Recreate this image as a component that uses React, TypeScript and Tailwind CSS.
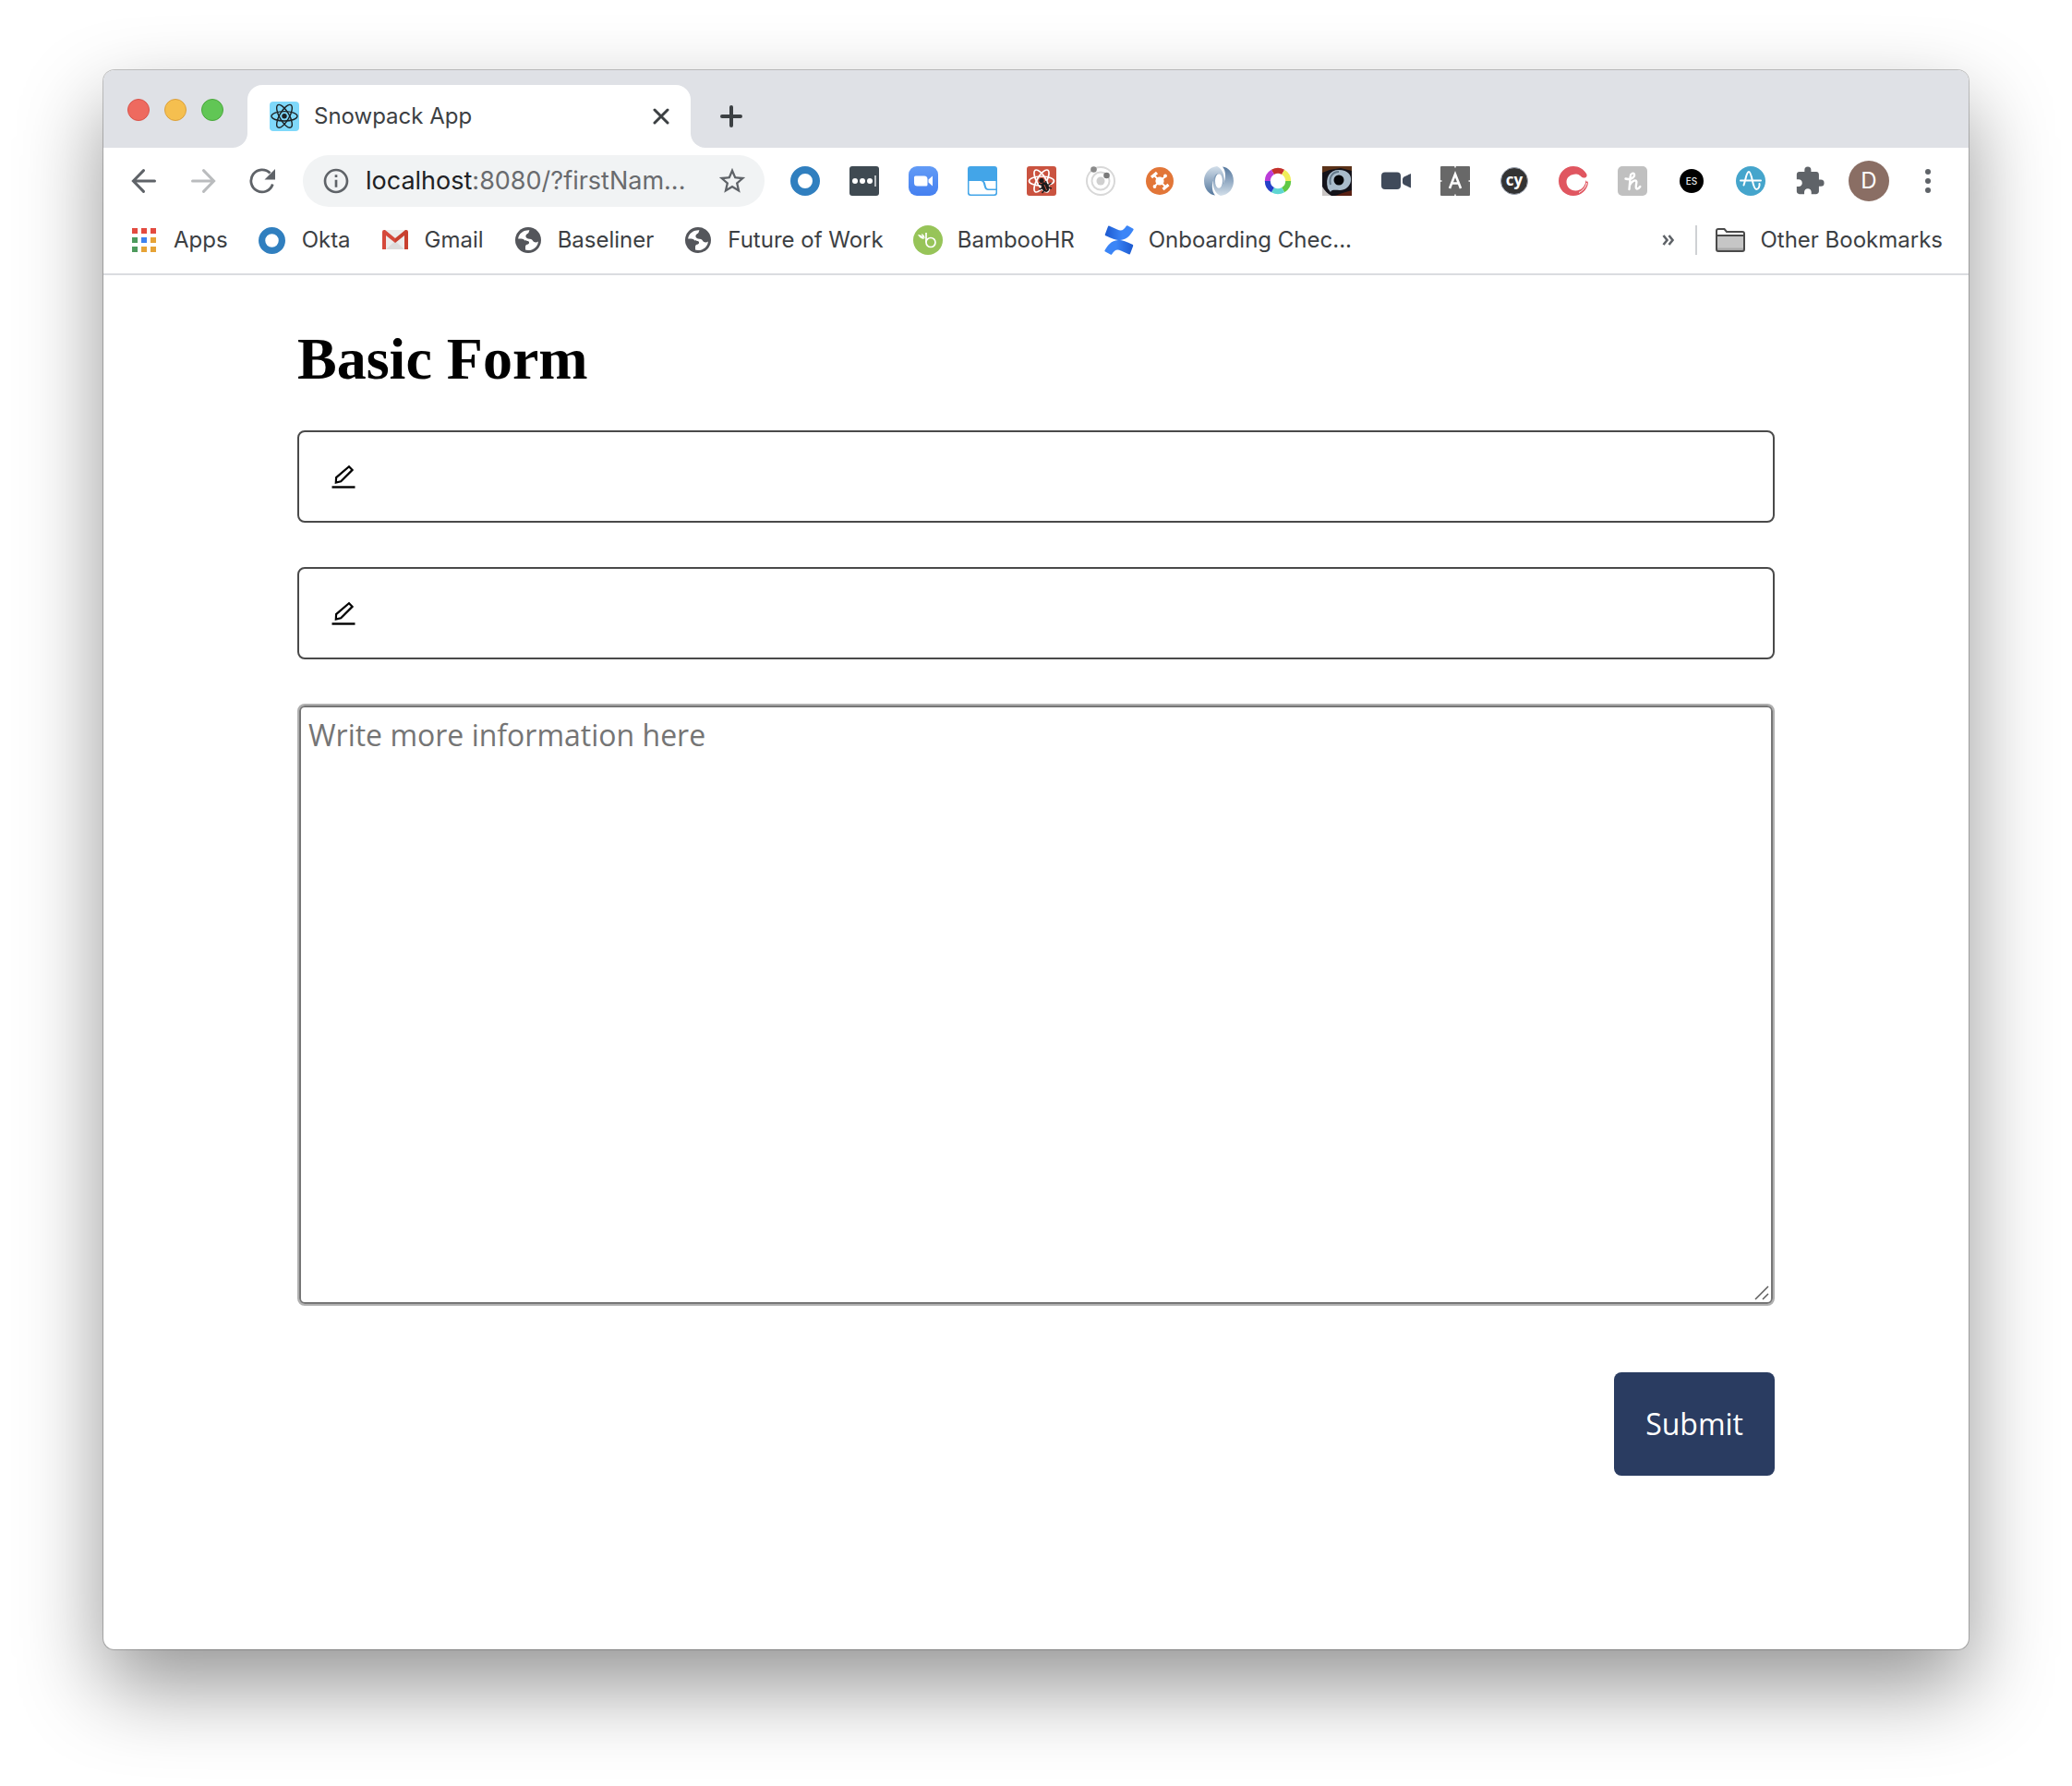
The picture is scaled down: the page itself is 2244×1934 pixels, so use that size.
import type { ReactNode } from 'react';
import { MdStarBorder, MdInfoOutline, MdExtension } from 'react-icons/md';

function OktaIcon({ size }: { size: number }) {
  return (
    <svg width={size} height={size} viewBox="0 0 32 32">
      <circle cx="16" cy="16" r="12" fill="none" stroke="#307fbf" strokeWidth="8" />
    </svg>
  );
}

function ReactIcon() {
  return (
    <svg width="32" height="32" viewBox="0 0 32 32">
      <rect width="32" height="32" rx="4" fill="#7fd8fa" />
      <circle cx="16" cy="15.8" r="2.7" fill="#1d2326" />
      <g fill="none" stroke="#1d2326" strokeWidth="1.4">
        <ellipse cx="16" cy="15.8" rx="14" ry="5.2" />
        <ellipse cx="16" cy="15.8" rx="14" ry="5.2" transform="rotate(60 16 15.8)" />
        <ellipse cx="16" cy="15.8" rx="14" ry="5.2" transform="rotate(120 16 15.8)" />
      </g>
    </svg>
  );
}

function ArrowIcon({ flip = false }: { flip?: boolean }) {
  return (
    <svg width="28" height="28" viewBox="0 0 28 28" className={flip ? 'rotate-180 text-[#babcbe]' : 'text-[#5f6368]'}>
      <path d="M25.5 14H2.8M13.5 2.6L2.4 14l11.1 11.4" fill="none" stroke="currentColor" strokeWidth="3" strokeLinecap="round" />
    </svg>
  );
}

function ReloadIcon() {
  return (
    <svg width="28" height="28" viewBox="0 0 28 28">
      <path d="M25.3 17.5A12 12 0 1 1 22.5 5.5" fill="none" stroke="#5f6368" strokeWidth="2.8" />
      <path d="M28 1v11.5H16.500z" fill="#5f6368" />
    </svg>
  );
}

function GmailIcon() {
  return (
    <svg width="28" height="22" viewBox="0 0 28 22">
      <path d="M2 0h24v21H2z" fill="#ececec" />
      <path d="M4 21L14 12l10 9z" fill="#dcdcdc" />
      <path d="M0 2q0-2 2-2h1l11 9v5L4 6v15H0z" fill="#d5493b" />
      <path d="M28 2q0-2-2-2h-1L14 9v5L24 6v15h4z" fill="#c8402f" />
    </svg>
  );
}

function GlobeIcon() {
  return (
    <svg width="28" height="28" viewBox="0 0 28 28">
      <circle cx="14" cy="14" r="14" fill="#54565b" />
      <path d="M15.500 3.200C9 2.700 3.600 7 3.100 12.500c2.500-.3 5.900 0 6.900 1.500 1 1.400 3.500.3 4.600 1.500 1 1.200.2 3-1.600 3.200-1.500.2-2 1.300-2 2.600v3.300c1.700.6 4.800.6 6.900-.2 4-1.500 6.700-4.800 7-8.900-1.500.8-3 1.300-4.500.4-1.600-1-1.700-2.700-3.400-3-2.500-.3-5.500-.8-5.600-3.200 0-2 1.700-2.400 2.700-3.300.8-.8.700-2.200 1.400-3.200z" fill="#fff" />
    </svg>
  );
}

function BambooIcon() {
  return (
    <svg width="32" height="32" viewBox="0 0 32 32">
      <circle cx="16" cy="16" r="16" fill="#97c459" />
      <g fill="none" stroke="#fff">
        <path d="M14 8v10.500" strokeWidth="1.700" />
        <circle cx="19" cy="18.500" r="5" strokeWidth="1.700" />
      </g>
      <path d="M5 10c3 .2 5 1 7 5-3.500-.3-5.500-2-7-5zM9 9c2.300 1 3.500 2.500 3.600 5.200C10.500 13 9.500 11.500 9 9z" fill="#fff" />
    </svg>
  );
}

function ConfluenceIcon() {
  const wing = 'M5 .6Q4.500 0 4 1.200L.8 9.800Q.6 10.800 1.500 11.200C8 14 12 16 17 16c8-.5 11-5.500 14.500-11Q32 4 31 3.500L25 .2Q24.200 0 23.800.7C21 5 18.500 6.800 14 4.500z';
  return (
    <svg width="32" height="32" viewBox="0 0 32 32">
      <defs>
        <linearGradient id="wing" x1="1" y1="0" x2="0" y2="0">
          <stop offset=".4" stopColor="#3b85f7" />
          <stop offset="1" stopColor="#1c59cf" />
        </linearGradient>
      </defs>
      <path d={wing} fill="url(#wing)" />
      <path d={wing} fill="url(#wing)" transform="rotate(180 16 16)" />
    </svg>
  );
}

function AppsIcon() {
  const colors = ['#e34a3f', '#e34a3f', '#e34a3f', '#4d9a5d', '#3d82f0', '#e6a336', '#4d9a5d', '#e6a336', '#e6a336'];
  return (
    <svg width="26" height="26" viewBox="0 0 26 26">
      {colors.map((c, i) => (
        <rect key={i} x={(i % 3) * 10} y={Math.floor(i / 3) * 10} width="6" height="6" fill={c} />
      ))}
    </svg>
  );
}

function FolderIcon() {
  return (
    <svg width="32" height="26" viewBox="0 0 32 26">
      <path d="M1 3q0-2 2-2h6.500l2.500 3h17q2 0 2 2v17q0 2-2 2H3q-2 0-2-2z" fill="#fff" />
      <path d="M2 8h28v16H2z" fill="#c6c6c6" />
      <path d="M2 21.500h28V24H2z" fill="#ababab" />
      <path d="M1 3q0-2 2-2h6.500l2.500 3h17q2 0 2 2v17q0 2-2 2H3q-2 0-2-2zM1 8h30" fill="none" stroke="#4a4a4a" strokeWidth="2" />
    </svg>
  );
}

function Svg32({ children }: { children: ReactNode }) {
  return (
    <svg width="32" height="32" viewBox="0 0 32 32">
      {children}
    </svg>
  );
}

function arc(i: number) {
  const a = ((i * 60 - 120) * Math.PI) / 180;
  const b = ((i * 60 - 60) * Math.PI) / 180;
  const p = (t: number) => `${16 + 11.2 * Math.cos(t)} ${16 + 11.2 * Math.sin(t)}`;
  return `M${p(a)}A11.2 11.2 0 0 1 ${p(b)}`;
}

const extensions: { name: string; icon: ReactNode }[] = [
  { name: 'Okta', icon: <OktaIcon size={32} /> },
  {
    name: 'Passwords',
    icon: (
      <Svg32>
        <rect width="32" height="32" rx="3" fill="#3f4a52" />
        <g fill="#fff">
          <circle cx="6" cy="16" r="3" />
          <circle cx="14" cy="16" r="3" />
          <circle cx="22" cy="16" r="3" />
        </g>
        <path d="M28 10v12" stroke="#c8ccd0" strokeWidth="1.8" />
      </Svg32>
    ),
  },
  {
    name: 'Zoom',
    icon: (
      <Svg32>
        <defs>
          <linearGradient id="zm" x1="0" y1="0" x2="0" y2="1">
            <stop stopColor="#629bf6" />
            <stop offset="1" stopColor="#4580f0" />
          </linearGradient>
        </defs>
        <rect width="32" height="32" rx="9" fill="url(#zm)" />
        <path d="M6 12q0-1.500 1.500-1.500H17q3.500 0 3.500 3.500v6q0 1.500-1.500 1.500H9.500Q6 21.500 6 18zM21.500 14.500l4.500-4v11l-4.500-4z" fill="#fff" />
      </Svg32>
    ),
  },
  {
    name: 'Window layout',
    icon: (
      <Svg32>
        <rect width="32" height="32" rx="3" fill="#43a5e8" />
        <path d="M1.500 16H14c5 0 2 10 8 10h8.500v2.500q0 2-2 2h-25q-2 0-2-2z" fill="#fff" />
        <path d="M17.500 16h13v8.500H23c-4.500 0-2.500-6.500-5.500-8.500z" fill="#fff" />
      </Svg32>
    ),
  },
  {
    name: 'React Developer Tools',
    icon: (
      <Svg32>
        <rect width="32" height="32" rx="3" fill="#ca5340" />
        <g fill="none" stroke="#fff" strokeWidth="1.7">
          <ellipse cx="16" cy="16" rx="13.500" ry="5" />
          <ellipse cx="16" cy="16" rx="13.500" ry="5" transform="rotate(60 16 16)" />
          <ellipse cx="16" cy="16" rx="13.500" ry="5" transform="rotate(120 16 16)" />
        </g>
        <g fill="#1b1b1b" stroke="#1b1b1b">
          <circle cx="16" cy="15.500" r="2.200" />
          <ellipse cx="20" cy="22.500" rx="3.400" ry="5" transform="rotate(-25 20 22.500)" />
          <path d="M13 19l4 1.500M13.500 25l4-1.500M16.500 29l2.500-3M20.500 16l1 4M26.500 18l-3.500 2.500M27 24l-4-1" strokeWidth="1.400" fill="none" />
        </g>
        <path d="M19 20l2.500 6" stroke="#ca5340" strokeWidth="1" />
      </Svg32>
    ),
  },
  {
    name: 'Orbit',
    icon: (
      <Svg32>
        <circle cx="16" cy="16" r="4.500" fill="#cfcfcf" />
        <g fill="none" stroke="#d8d8d8" strokeWidth="2">
          <circle cx="16" cy="16" r="9.500" />
          <circle cx="16" cy="16" r="15" />
        </g>
        <circle cx="8.500" cy="3.500" r="3.300" fill="#8a8a8a" />
        <circle cx="22.500" cy="10" r="3.300" fill="#7a7a7a" />
      </Svg32>
    ),
  },
  {
    name: 'Drone',
    icon: (
      <Svg32>
        <circle cx="16" cy="16" r="15" fill="#e27638" />
        <circle cx="16" cy="16" r="4.600" fill="#fff" />
        <path d="M10 10l12 12M22 11L10 22" stroke="#fff" strokeWidth="1.800" />
        <path d="M7 12l6-5M19.500 25l6-5" stroke="#fff" strokeWidth="3.200" />
        <g fill="#fff">
          <circle cx="22" cy="10.500" r="1.900" />
          <circle cx="10.500" cy="22" r="1.900" />
        </g>
      </Svg32>
    ),
  },
  {
    name: 'JSON',
    icon: (
      <Svg32>
        <defs>
          <linearGradient id="jsA" x1="0" y1="0" x2="0" y2="1">
            <stop stopColor="#54779d" />
            <stop offset="1" stopColor="#d3dfea" />
          </linearGradient>
          <linearGradient id="jsB" x1="0" y1="0" x2="0" y2="1">
            <stop stopColor="#d3dfea" />
            <stop offset="1" stopColor="#54779d" />
          </linearGradient>
        </defs>
        <path d="M16 24C24 24 24 4 14 0 5 1 0 8 0 16c0 9 6 15 12 15.500C7 26 8 12 16 9c-5 3-5 12 0 15z" fill="url(#jsB)" />
        <path d="M16 8c-8 0-9 20 2 24 9-1 14-8 14-16C32 7 26 1 20 .5 25 6 24 20 16 23c5-3 5-12 0-15z" fill="url(#jsA)" />
        <ellipse cx="16" cy="16" rx="4" ry="7.800" fill="#fff" />
      </Svg32>
    ),
  },
  {
    name: 'Color picker',
    icon: (
      <Svg32>
        {['#c4312b', '#f0ee5a', '#5fc944', '#5fd6d2', '#2540c8', '#bb3cd8'].map((c, i) => (
          <path key={c} d={arc(i)} fill="none" stroke={c} strokeWidth="6" />
        ))}
      </Svg32>
    ),
  },
  {
    name: 'Eye',
    icon: (
      <Svg32>
        <rect width="32" height="32" fill="#14131a" />
        <path d="M0 0h32v5L20 2 8 4 0 7z" fill="#5b3218" />
        <path d="M0 22q4 7 10 10H0z" fill="#c9c5c4" />
        <path d="M14 32l8-3 10-3v6z" fill="#5a2114" />
        <path d="M6 24C3 12 8 4 18 4s14 6 13 12-6 10-12 10c-5 0-9-1-10 2z" fill="#a9bccb" />
        <path d="M9 20C7 12 11 6 18 6" fill="none" stroke="#64798a" strokeWidth="2" />
        <circle cx="18" cy="15" r="5.500" fill="#050508" />
      </Svg32>
    ),
  },
  {
    name: 'Video recorder',
    icon: (
      <Svg32>
        <rect y="6.500" width="21" height="18.500" rx="4" fill="#404a5a" />
        <path d="M23 14q0-1.500 1.500-2.500L32 8v15.500L24.500 20Q23 19 23 17.500z" fill="#404a5a" />
      </Svg32>
    ),
  },
  {
    name: 'Accessibility',
    icon: (
      <Svg32>
        <rect width="32" height="32" rx="1" fill="#686868" />
        <path d="M16 0v1.500M16 30.500V32M0 16h1.500M30.500 16H32" stroke="#fff" strokeWidth="1.500" />
        <path d="M10 24L16 8.500 22 24M12.500 18.500h7" fill="none" stroke="#fff" strokeWidth="2.600" />
      </Svg32>
    ),
  },
  {
    name: 'Cypress',
    icon: (
      <span className="flex size-[30px] items-center justify-center rounded-full border border-gray-400 bg-[#333333] pb-1 font-['Open_Sans',sans-serif] text-[17px] leading-none font-bold text-white">
        cy
      </span>
    ),
  },
  {
    name: 'Chakra',
    icon: (
      <Svg32>
        <path d="M30 8C27 3 22 0 16 0 7 0 0 7 0 16s7 16 16 16c8 0 15-6 16-14l-1-2-.7 1-.8-2c-.5 6-5 11.500-11 11.500S8.500 22 8.500 17 13 8.500 19 8.500c4 0 5 3.500 8 4 3 .3 4.500-2 3-4.500z" fill="#e05660" />
        <path d="M30.500 18c-1.500 6-5 8.500-8.500 10.500M28.500 17.500c-1 4-3 6-5.500 7.500" fill="none" stroke="#fff" strokeWidth="1" />
      </Svg32>
    ),
  },
  {
    name: 'Honey',
    icon: (
      <Svg32>
        <rect width="32" height="32" rx="5" fill="#c0c0c0" />
        <path d="M8.500 13.500c5 1.500 10-1 9.500-4.500-.5-2.500-4-1.500-4.300 2L12.500 25M13 20.500c1.500-3.500 6.500-7 7.300-4 .5 2.500-2 7.500.5 8 1.500.2 2.500-1 3.500-2.500" fill="none" stroke="#fff" strokeWidth="2.400" strokeLinecap="round" />
      </Svg32>
    ),
  },
  {
    name: 'ES',
    icon: (
      <span className="flex size-[26px] items-center justify-center rounded-full bg-black text-[10px] leading-none font-medium text-gray-200">
        ES
      </span>
    ),
  },
  {
    name: 'Amplitude',
    icon: (
      <Svg32>
        <circle cx="16" cy="16" r="16" fill="#45a5cc" />
        <path d="M5 15.500h22M8.500 20.500C11 13 11.500 6 14 6c3.500 0 4 19 8 19 2.500 0 4-3 3.500-6" fill="none" stroke="#fff" strokeWidth="2" strokeLinecap="round" />
      </Svg32>
    ),
  },
  { name: 'Extensions', icon: <MdExtension size={34} color="#5f6368" /> },
];

const bookmarks: { label: string; icon: ReactNode }[] = [
  { label: 'Apps', icon: <AppsIcon /> },
  { label: 'Okta', icon: <OktaIcon size={29} /> },
  { label: 'Gmail', icon: <GmailIcon /> },
  { label: 'Baseliner', icon: <GlobeIcon /> },
  { label: 'Future of Work', icon: <GlobeIcon /> },
  { label: 'BambooHR', icon: <BambooIcon /> },
  { label: 'Onboarding Chec...', icon: <ConfluenceIcon /> },
];

function TabStrip() {
  return (
    <div className="flex h-[84px] items-end bg-[#dfe1e6]">
      <div className="flex h-full items-center gap-4 pt-[2px] pl-[26px]">
        <button aria-label="Close window" className="size-6 rounded-full border border-[#d9544b] bg-[#ee6a5f]" />
        <button aria-label="Minimize window" className="size-6 rounded-full border border-[#dba03c] bg-[#f5bf4f]" />
        <button aria-label="Zoom window" className="size-6 rounded-full border border-[#4aa73c] bg-[#61c655]" />
      </div>
      <div className="ml-[10px] flex items-end">
        <div className="size-4 bg-white">
          <div className="size-4 rounded-br-2xl bg-[#dfe1e6]" />
        </div>
        <div className="flex h-[68px] w-[480px] items-center rounded-t-2xl bg-white pr-5 pl-6">
          <ReactIcon />
          <span className="ml-4 flex-1 text-2xl text-[#3c4043]">Snowpack App</span>
          <button aria-label="Close tab" className="flex size-6 items-center justify-center">
            <svg width="18" height="18" viewBox="0 0 18 18">
              <path d="M2 2l14 14M16 2L2 16" stroke="#3c4043" strokeWidth="3" strokeLinecap="round" />
            </svg>
          </button>
        </div>
        <div className="size-4 bg-white">
          <div className="size-4 rounded-bl-2xl bg-[#dfe1e6]" />
        </div>
      </div>
      <button aria-label="New tab" className="mb-[22px] ml-4">
        <svg width="24" height="24" viewBox="0 0 24 24">
          <path d="M12 2v20M2 12h20" stroke="#3c4043" strokeWidth="4" strokeLinecap="round" />
        </svg>
      </button>
    </div>
  );
}

function Toolbar() {
  const cell = 'flex h-16 w-16 shrink-0 items-center justify-center';
  return (
    <div className="flex h-[72px] items-center px-3">
      <button aria-label="Back" className={cell}>
        <ArrowIcon />
      </button>
      <button aria-label="Forward" className={cell}>
        <ArrowIcon flip />
      </button>
      <button aria-label="Reload" className={cell}>
        <ReloadIcon />
      </button>
      <div className="mx-3 flex h-14 min-w-0 flex-1 items-center rounded-full bg-[#f1f3f4] pr-[18px] pl-5">
        <MdInfoOutline size={32} color="#5f6368" className="shrink-0" />
        <a href="#" className="ml-4 min-w-0 flex-1 truncate text-[27px] text-[#696b6e]">
          <span className="text-[#202124]">localhost</span>:8080/?firstNam...
        </a>
        <button aria-label="Bookmark this page" className="shrink-0">
          <MdStarBorder size={34} color="#5f6368" />
        </button>
      </div>
      {extensions.map((e) => (
        <button key={e.name} aria-label={e.name} className={cell}>
          {e.icon}
        </button>
      ))}
      <button aria-label="Profile" className={cell}>
        <span className="flex size-11 items-center justify-center rounded-full bg-[#8a6e64] text-2xl text-white">D</span>
      </button>
      <button aria-label="Menu" className={cell}>
        <svg width="6" height="26" viewBox="0 0 6 26" fill="#5f6368">
          <circle cx="3" cy="3" r="3" />
          <circle cx="3" cy="13" r="3" />
          <circle cx="3" cy="23" r="3" />
        </svg>
      </button>
    </div>
  );
}

function BookmarksBar() {
  return (
    <nav className="flex h-[66px] items-center border-b-2 border-[#dadce0] pr-7 pb-2 pl-7 text-2xl text-[#3c4043]">
      <div className="flex flex-1 items-center gap-8">
        {bookmarks.map((b) => (
          <a key={b.label} href="#" className="flex items-center gap-4 whitespace-nowrap">
            <span className="flex w-8 justify-center">{b.icon}</span>
            {b.label}
          </a>
        ))}
      </div>
      <button aria-label="More bookmarks">
        <svg width="14" height="12" viewBox="0 0 14 12">
          <path d="M1.500 1l4 5-4 5M7.500 1l4 5-4 5" fill="none" stroke="#5f6368" strokeWidth="2.600" />
        </svg>
      </button>
      <div className="mr-5 ml-[22px] h-8 w-[2px] bg-[#cfd1d4]" />
      <a href="#" className="flex items-center gap-4 whitespace-nowrap">
        <FolderIcon />
        Other Bookmarks
      </a>
    </nav>
  );
}

function TextField({ label }: { label: string }) {
  return (
    <label className="flex h-[100px] items-center rounded-lg border-2 border-[#4a4a4a] bg-white pr-8 pl-[34px]">
      <svg width="28" height="28" viewBox="0 0 28 28" fill="none" stroke="#000" className="shrink-0">
        <path d="M20 3.200l3.600 3.700L11.200 19.300l-5.400 1.200.3-5.400z" strokeWidth="2.200" />
        <path d="M1.500 25.500h25" strokeWidth="2.400" />
      </svg>
      <input type="text" aria-label={label} className="ml-4 h-full min-w-0 flex-1 font-['Open_Sans',sans-serif] text-[32px] outline-none" />
    </label>
  );
}

export default function App() {
  return (
    <div className="bg-white px-28 pt-[76px] pb-[148px]">
      <div className="overflow-hidden rounded-xl bg-white font-['Inter',sans-serif] shadow-[0_0_0_1px_rgba(0,0,0,0.22),0_40px_90px_rgba(0,0,0,0.42)]">
        <TabStrip />
        <Toolbar />
        <BookmarksBar />
        <main className="mx-auto max-w-[1600px] pt-14 pb-[188px]">
          <h1 className="font-['Liberation_Serif',serif] text-[64px] leading-[70px] font-bold text-black">Basic Form</h1>
          <form className="mt-[42px] flex flex-col gap-12" onSubmit={(e) => e.preventDefault()}>
            <TextField label="First name" />
            <TextField label="Last name" />
            <div className="relative rounded-lg border-2 border-[#b0b0b0]">
              <textarea
                aria-label="More information"
                placeholder="Write more information here"
                className="block h-[648px] w-full resize-y rounded-md border-2 border-[#767676] px-2 py-2 font-['Open_Sans',sans-serif] text-[32px] leading-[44px] outline-none placeholder:text-[#757575] [&::-webkit-resizer]:hidden"
              />
              <svg width="16" height="16" viewBox="0 0 16 16" className="pointer-events-none absolute right-1 bottom-1">
                <path d="M1 15L15 1M9 15l6-6" stroke="#5c5c5c" strokeWidth="1.500" />
              </svg>
            </div>
            <button
              type="submit"
              className="mt-6 h-28 self-end rounded-lg bg-[#2a3c61] px-[34px] font-['Open_Sans',sans-serif] text-[32px] text-white"
            >
              Submit
            </button>
          </form>
        </main>
      </div>
    </div>
  );
}
